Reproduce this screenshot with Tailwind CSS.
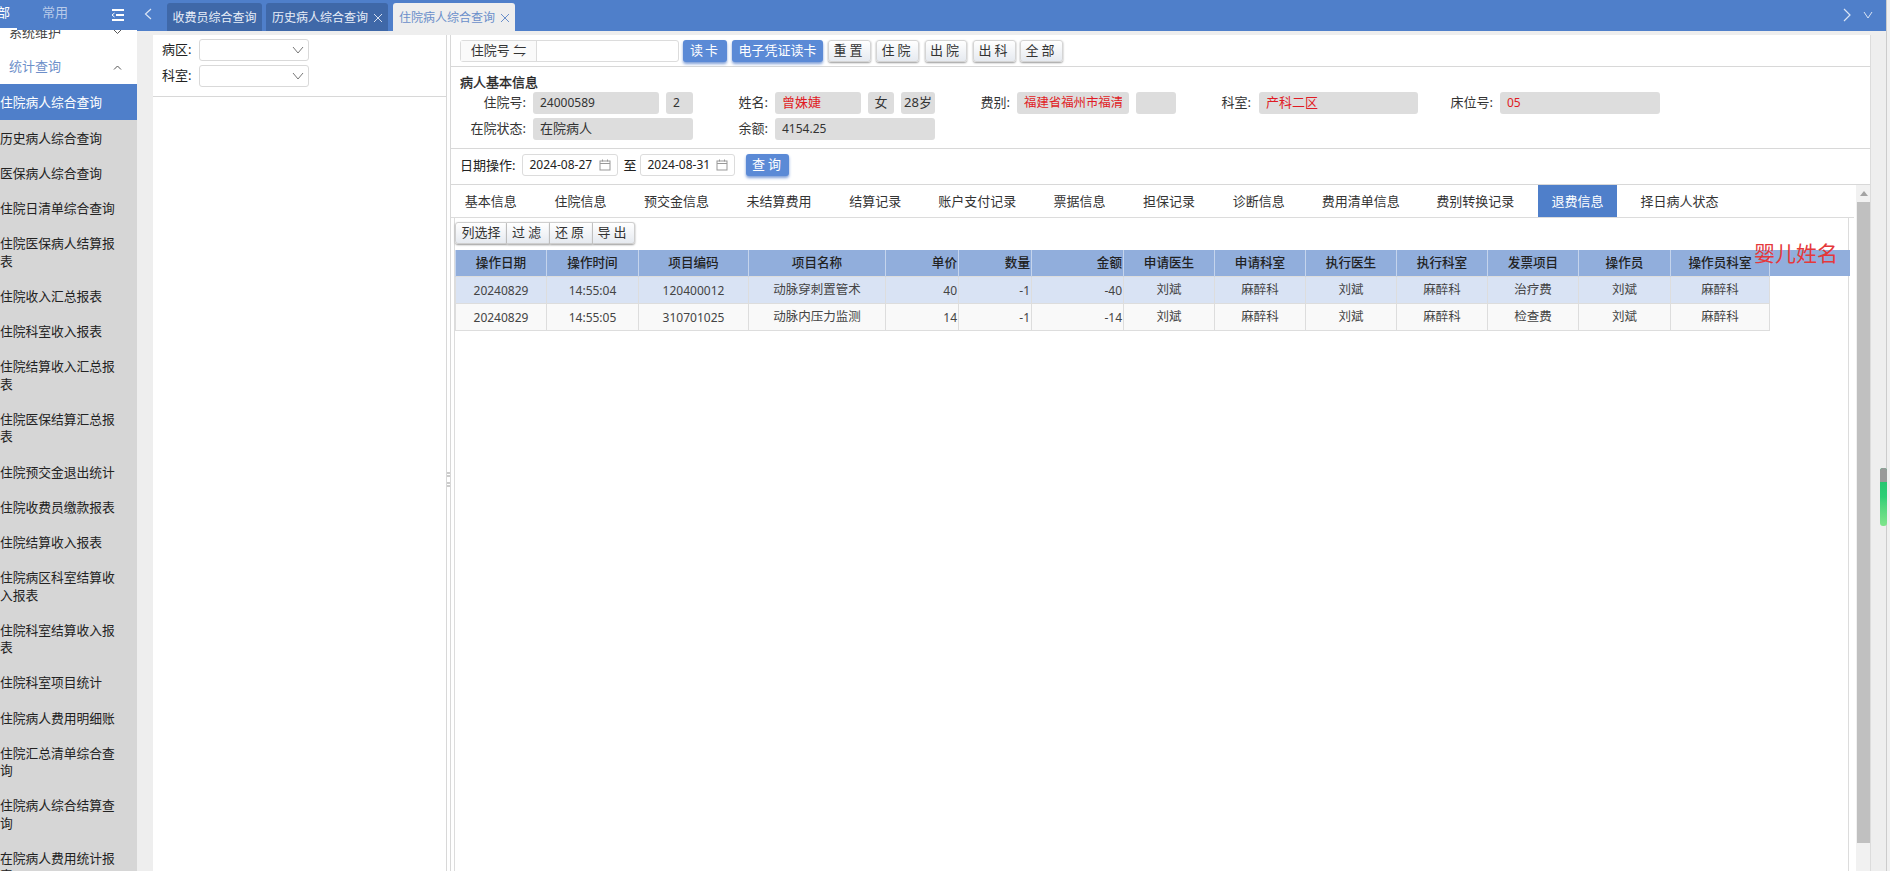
<!DOCTYPE html>
<html lang="zh-CN">
<head>
  <meta charset="UTF-8">
  <title>住院病人综合查询</title>
  <script src="https://cdn.jsdelivr.net/npm/@tailwindcss/browser@4"></script>
</head>
<body class="overflow-hidden bg-white text-[13px] text-[#333] font-['Noto_Sans','Noto_Sans_CJK_SC',sans-serif]">
<div class="relative flex h-[871px] w-[1890px] overflow-hidden">

  <!-- sidebar -->
  <aside class="flex w-[137px] shrink-0 flex-col bg-[#d6d6d6]">
    <div class="relative flex h-[30px] shrink-0 items-start bg-[#4f7fca] text-white">
      <span class="mt-[3px] block w-[42px] -indent-[3px]">部</span>
      <span class="mt-[3px] text-[#b9cbe9]">常用</span>
      <svg class="absolute left-[111px] top-[8px]" width="14" height="14" viewBox="0 0 14 14" fill="none" stroke="#fff" stroke-width="2"><path d="M1 2h12M5 7h8M1 12h12"/><path d="M3.5 5 1 7l2.5 2" stroke-width="1"/></svg>
      <div class="absolute bottom-0 left-0 h-[2px] w-[17px] bg-white"></div>
    </div>
    <div class="relative h-[24px] shrink-0 overflow-hidden bg-white">
      <span class="absolute left-[9px] -top-[7px] text-[#444]">系统维护</span>
      <svg class="absolute left-[113px] top-0" width="9" height="5" viewBox="0 0 9 5" fill="none" stroke="#555"><path d="M1 0l3.5 3.5L8 0"/></svg>
    </div>
    <div class="flex h-[30px] shrink-0 items-center justify-between bg-white pl-[9px] pr-[15px] pb-[4px] text-[#6d8fc9]">
      <span>统计查询</span>
      <svg width="9" height="5" viewBox="0 0 9 5" fill="none" stroke="#555"><path d="M1 4.5 4.5 1 8 4.5"/></svg>
    </div>
    <div class="flex h-[36px] shrink-0 items-center bg-[#4f7fca] pt-[1px] text-[12.75px] text-white">住院病人综合查询</div>
    <nav id="menu" class="text-[12.75px] text-[#222]"></nav>
  </aside>

  <main class="flex w-[1749px] shrink-0 flex-col bg-[#eeeeee]">
    <!-- tab bar -->
    <div class="flex h-[31px] shrink-0 items-end whitespace-nowrap bg-[#4f7fca] text-[12px]">
      <svg class="mb-[11px] ml-[7px] mr-[15px] shrink-0" width="8" height="12" viewBox="0 0 8 12" fill="none" stroke="#dbe5f5" stroke-width="1.2"><path d="M7 1 1.5 6 7 11"/></svg>
      <div class="flex h-[28px] w-[95px] items-center justify-center rounded-t-[3px] bg-[#3f68a8] pt-[1px] text-[#e8eef8]">收费员综合查询</div>
      <div class="ml-[4px] flex h-[28px] w-[122px] items-center gap-[5px] rounded-t-[3px] bg-[#3f68a8] pl-[6px] pt-[1px] text-[#e8eef8]">历史病人综合查询
        <svg width="10" height="10" viewBox="0 0 10 10" stroke="#d5dff0"><path d="M1 1l8 8M9 1l-8 8"/></svg>
      </div>
      <div class="ml-[5px] flex h-[28px] w-[122px] items-center gap-[5px] rounded-t-[3px] bg-[#eeeeee] pl-[6px] pt-[1px] text-[#6a8fca]">住院病人综合查询
        <svg width="10" height="10" viewBox="0 0 10 10" stroke="#6a8fca"><path d="M1 1l8 8M9 1l-8 8"/></svg>
      </div>
      <div class="ml-auto mb-[9px] flex items-center gap-[12px] pr-[13px]">
        <svg width="8" height="14" viewBox="0 0 8 14" fill="none" stroke="#dbe5f5" stroke-width="1.2"><path d="M1 1l6 6-6 6"/></svg>
        <svg width="10" height="8" viewBox="0 0 10 8" fill="none" stroke="#dbe5f5"><path d="M1 1l4 6 4-6"/></svg>
      </div>
    </div>

    <div class="flex min-h-0 flex-1 pt-[4px]">
      <!-- filter panel -->
      <section class="ml-[16px] w-[294px] shrink-0 border-r border-[#d8d8d8] bg-white">
        <div class="flex h-[62px] flex-col gap-[4px] border-b border-[#d8d8d8] pl-[9px] pt-[4px]">
          <label class="flex items-center gap-[6px]"><span class="w-[31px] text-[#222]">病区:</span>
            <span class="flex h-[22px] w-[110px] items-center justify-end rounded-[3px] border border-[#d9d9d9] bg-white pr-[4px]">
              <svg width="12" height="8" viewBox="0 0 12 8" fill="none" stroke="#777"><path d="M1 1l5 6 5-6"/></svg></span></label>
          <label class="flex items-center gap-[6px]"><span class="w-[31px] text-[#222]">科室:</span>
            <span class="flex h-[22px] w-[110px] items-center justify-end rounded-[3px] border border-[#d9d9d9] bg-white pr-[4px]">
              <svg width="12" height="8" viewBox="0 0 12 8" fill="none" stroke="#777"><path d="M1 1l5 6 5-6"/></svg></span></label>
        </div>
      </section>

      <!-- splitter -->
      <div class="flex w-[4px] shrink-0 flex-col gap-[1px] border-r border-[#d8d8d8] bg-white pt-[437px]">
        <span class="h-[2px] w-[3px] bg-[#cccccc]"></span><span class="h-[2px] w-[3px] bg-[#cccccc]"></span>
        <span class="mt-[4px] h-[2px] w-[3px] bg-[#cccccc]"></span><span class="h-[2px] w-[3px] bg-[#cccccc]"></span>
      </div>

      <!-- patient panel -->
      <section class="flex w-[1420px] shrink-0 flex-col border-r border-[#dcdcdc] bg-white">
        <div class="flex h-[32px] shrink-0 items-start gap-[5px] border-b border-[#d8d8d8] pl-[9px] pt-[5px]">
          <div class="mr-[-1px] flex h-[22px] w-[219px] rounded-[3px] border border-[#dcdcdc]">
            <span class="flex w-[76px] items-center justify-center border-r border-[#dcdcdc] bg-[#fafafa]">住院号 ⇋</span>
          </div>
          <button class="h-[22px] w-[44px] rounded-[3px] bg-[#5b8ad6] text-white tracking-[2px] shadow-[0_2px_3px_#7f9fd8]">读卡</button>
          <button class="h-[22px] w-[91px] rounded-[3px] bg-[#5b8ad6] text-white shadow-[0_2px_3px_#7f9fd8]">电子凭证读卡</button>
          <button class="h-[22px] w-[43px] rounded-[3px] border border-[#d5d5d5] bg-linear-to-b from-white to-[#e6eaf0] tracking-[3px] shadow-[0_1px_2px_#999]">重置</button>
          <button class="h-[22px] w-[43px] rounded-[3px] border border-[#d5d5d5] bg-linear-to-b from-white to-[#e6eaf0] tracking-[3px] shadow-[0_1px_2px_#999]">住院</button>
          <button class="ml-[1px] h-[22px] w-[42px] rounded-[3px] border border-[#d5d5d5] bg-linear-to-b from-white to-[#e6eaf0] tracking-[3px] shadow-[0_1px_2px_#999]">出院</button>
          <button class="ml-[1px] h-[22px] w-[43px] rounded-[3px] border border-[#d5d5d5] bg-linear-to-b from-white to-[#e6eaf0] tracking-[3px] shadow-[0_1px_2px_#999]">出科</button>
          <button class="ml-[-1px] h-[22px] w-[43px] rounded-[3px] border border-[#d5d5d5] bg-linear-to-b from-white to-[#e6eaf0] tracking-[3px] shadow-[0_1px_2px_#999]">全部</button>
        </div>

        <!-- basic info -->
        <div class="h-[82px] shrink-0 border-b border-[#d8d8d8] pl-[9px] pt-[6px]">
          <div class="h-[19px] leading-[19px] text-[#222] [-webkit-text-stroke:0.3px]">病人基本信息</div>
          <div class="flex h-[22px] items-center">
            <span class="w-[66px] text-right">住院号:</span>
            <span class="ml-[7px] flex h-[22px] w-[126px] items-center rounded-[3px] bg-[#dddddd] pl-[7px] text-[12px]">24000589</span>
            <span class="ml-[7px] flex h-[22px] w-[27px] items-center rounded-[3px] bg-[#dddddd] pl-[7px] text-[12px]">2</span>
            <span class="ml-[44px] w-[31px] text-right">姓名:</span>
            <span class="ml-[7px] flex h-[22px] w-[86px] items-center rounded-[3px] bg-[#dddddd] pl-[7px] text-[#e01b24]">曾姝婕</span>
            <span class="ml-[7px] flex h-[22px] w-[26px] items-center justify-center rounded-[3px] bg-[#dddddd]">女</span>
            <span class="ml-[7px] flex h-[22px] w-[34px] items-center justify-center rounded-[3px] bg-[#dddddd]">28岁</span>
            <span class="ml-[44px] w-[31px] text-right">费别:</span>
            <span class="ml-[7px] flex h-[22px] w-[112px] items-center rounded-[3px] bg-[#dddddd] px-[7px] text-[12.4px] text-[#e01b24]"><span class="block overflow-hidden whitespace-nowrap">福建省福州市福清市</span></span>
            <span class="ml-[7px] h-[22px] w-[40px] rounded-[3px] bg-[#dddddd]"></span>
            <span class="ml-[45px] w-[30px] text-right">科室:</span>
            <span class="ml-[8px] flex h-[22px] w-[159px] items-center rounded-[3px] bg-[#dddddd] pl-[7px] text-[#e01b24]">产科二区</span>
            <span class="ml-[32px] w-[43px] text-right">床位号:</span>
            <span class="ml-[7px] flex h-[22px] w-[160px] items-center rounded-[3px] bg-[#dddddd] pl-[7px] text-[12px] text-[#e01b24]">05</span>
          </div>
          <div class="mt-[4px] flex h-[22px] items-center">
            <span class="w-[66px] text-right">在院状态:</span>
            <span class="ml-[7px] flex h-[22px] w-[160px] items-center rounded-[3px] bg-[#dddddd] pl-[7px]">在院病人</span>
            <span class="ml-[44px] w-[31px] text-right">余额:</span>
            <span class="ml-[7px] flex h-[22px] w-[160px] items-center rounded-[3px] bg-[#dddddd] pl-[7px] text-[12px]">4154.25</span>
          </div>
        </div>

        <!-- date row -->
        <div class="flex h-[36px] shrink-0 items-start border-b border-[#d8d8d8] pl-[9px] pt-[5px] text-[#222]">
          <span class="leading-[22px]">日期操作:</span>
          <span class="ml-[7px] flex h-[22px] w-[96px] items-center justify-between rounded-[3px] border border-[#dcdcdc] px-[6px] text-[12px]">2024-08-27
            <svg width="12" height="12" viewBox="0 0 12 12" fill="none" stroke="#999"><rect x="1" y="2" width="10" height="9"/><path d="M1 4.5h10M3.5 .5v2M8.5 .5v2"/></svg></span>
          <span class="ml-[5px] w-[17px] leading-[22px]">至</span>
          <span class="flex h-[22px] w-[95px] items-center justify-between rounded-[3px] border border-[#dcdcdc] px-[6px] text-[12px]">2024-08-31
            <svg width="12" height="12" viewBox="0 0 12 12" fill="none" stroke="#999"><rect x="1" y="2" width="10" height="9"/><path d="M1 4.5h10M3.5 .5v2M8.5 .5v2"/></svg></span>
          <button class="ml-[11px] h-[22px] w-[43px] rounded-[3px] bg-[#5b8ad6] text-white tracking-[3px] shadow-[0_2px_3px_#7f9fd8]">查询</button>
        </div>

        <!-- detail area -->
        <div class="flex min-h-0 flex-1">
          <div class="flex w-[1403px] shrink-0 flex-col">
            <div class="flex h-[33px] shrink-0 gap-[10px] border-b border-[#dcdcdc] text-[#333]">
              <span class="flex w-[79.7px] items-center justify-center pt-[2px]">基本信息</span>
              <span class="flex w-[79.7px] items-center justify-center pt-[2px]">住院信息</span>
              <span class="flex w-[92.5px] items-center justify-center pt-[2px]">预交金信息</span>
              <span class="flex w-[92.5px] items-center justify-center pt-[2px]">未结算费用</span>
              <span class="flex w-[79.7px] items-center justify-center pt-[2px]">结算记录</span>
              <span class="flex w-[104.5px] items-center justify-center pt-[2px]">账户支付记录</span>
              <span class="flex w-[79.7px] items-center justify-center pt-[2px]">票据信息</span>
              <span class="flex w-[79.7px] items-center justify-center pt-[2px]">担保记录</span>
              <span class="flex w-[79.7px] items-center justify-center pt-[2px]">诊断信息</span>
              <span class="flex w-[104.5px] items-center justify-center pt-[2px]">费用清单信息</span>
              <span class="flex w-[104.5px] items-center justify-center pt-[2px]">费别转换记录</span>
              <span class="flex w-[79.7px] items-center justify-center bg-[#4f7fca] pt-[2px] text-white">退费信息</span>
              <span class="flex w-[104.5px] items-center justify-center pt-[2px]">择日病人状态</span>
            </div>
            <div class="ml-[3px] flex min-h-0 w-[1395px] flex-1 flex-col border-x border-[#dcdcdc]">
              <div class="flex h-[32px] shrink-0 items-start pt-[4px]">
                <button class="h-[22px] w-[52px] rounded-l-[3px] border border-[#cfcfcf] bg-linear-to-b from-white to-[#e6eaf0] shadow-[0_1px_2px_#999]">列选择</button>
                <button class="h-[22px] w-[43px] border-y border-r border-[#cfcfcf] bg-linear-to-b from-white to-[#e6eaf0] tracking-[3px] shadow-[0_1px_2px_#999]">过滤</button>
                <button class="h-[22px] w-[43px] border-y border-r border-[#cfcfcf] bg-linear-to-b from-white to-[#e6eaf0] tracking-[3px] shadow-[0_1px_2px_#999]">还原</button>
                <button class="h-[22px] w-[42px] rounded-r-[3px] border-y border-r border-[#cfcfcf] bg-linear-to-b from-white to-[#e6eaf0] tracking-[3px] shadow-[0_1px_2px_#999]">导出</button>
              </div>
              <table class="w-[1393px] table-fixed border-collapse">
                <colgroup>
                  <col class="w-[91px]"><col class="w-[92px]"><col class="w-[110px]"><col class="w-[137px]">
                  <col class="w-[73px]"><col class="w-[73px]"><col class="w-[92px]"><col class="w-[91px]">
                  <col class="w-[91px]"><col class="w-[91px]"><col class="w-[91px]"><col class="w-[91px]">
                  <col class="w-[92px]"><col class="w-[99px]"><col class="w-[80px]">
                </colgroup>
                <thead>
                  <tr class="h-[26px] bg-[#91aedc] text-[12.6px] text-[#222] [&_th]:pt-[2px]">
                    <th class="border-x border-[#c5d4ec] font-medium">操作日期</th>
                    <th class="border-x border-[#c5d4ec] font-medium">操作时间</th>
                    <th class="border-x border-[#c5d4ec] font-medium">项目编码</th>
                    <th class="border-x border-[#c5d4ec] font-medium">项目名称</th>
                    <th class="border-x border-[#c5d4ec] pr-[1px] text-right font-medium">单价</th>
                    <th class="border-x border-[#c5d4ec] pr-[1px] text-right font-medium">数量</th>
                    <th class="border-x border-[#c5d4ec] pr-[1px] text-right font-medium">金额</th>
                    <th class="border-x border-[#c5d4ec] font-medium">申请医生</th>
                    <th class="border-x border-[#c5d4ec] font-medium">申请科室</th>
                    <th class="border-x border-[#c5d4ec] font-medium">执行医生</th>
                    <th class="border-x border-[#c5d4ec] font-medium">执行科室</th>
                    <th class="border-x border-[#c5d4ec] font-medium">发票项目</th>
                    <th class="border-x border-[#c5d4ec] font-medium">操作员</th>
                    <th class="border-x border-[#c5d4ec] font-medium">操作员科室</th>
                    <th></th>
                  </tr>
                </thead>
                <tbody class="text-center text-[12.5px] text-[#444] [&_td]:pt-[2px]">
                  <tr class="h-[27px]">
                    <td class="border border-[#dddddd] bg-[#d9e3f4] text-[12px]">20240829</td><td class="border border-[#dddddd] bg-[#d9e3f4] text-[12px]">14:55:04</td><td class="border border-[#dddddd] bg-[#d9e3f4] text-[12px]">120400012</td><td class="border border-[#dddddd] bg-[#d9e3f4]">动脉穿刺置管术</td>
                    <td class="border border-[#dddddd] bg-[#d9e3f4] pr-[1px] text-right text-[12px]">40</td><td class="border border-[#dddddd] bg-[#d9e3f4] pr-[1px] text-right text-[12px]">-1</td><td class="border border-[#dddddd] bg-[#d9e3f4] pr-[1px] text-right text-[12px]">-40</td>
                    <td class="border border-[#dddddd] bg-[#d9e3f4]">刘斌</td><td class="border border-[#dddddd] bg-[#d9e3f4]">麻醉科</td><td class="border border-[#dddddd] bg-[#d9e3f4]">刘斌</td><td class="border border-[#dddddd] bg-[#d9e3f4]">麻醉科</td><td class="border border-[#dddddd] bg-[#d9e3f4]">治疗费</td><td class="border border-[#dddddd] bg-[#d9e3f4]">刘斌</td><td class="border border-[#dddddd] bg-[#d9e3f4]">麻醉科</td><td></td>
                  </tr>
                  <tr class="h-[27px]">
                    <td class="border border-[#dddddd] bg-[#f9f9f9] text-[12px]">20240829</td><td class="border border-[#dddddd] bg-[#f9f9f9] text-[12px]">14:55:05</td><td class="border border-[#dddddd] bg-[#f9f9f9] text-[12px]">310701025</td><td class="border border-[#dddddd] bg-[#f9f9f9]">动脉内压力监测</td>
                    <td class="border border-[#dddddd] bg-[#f9f9f9] pr-[1px] text-right text-[12px]">14</td><td class="border border-[#dddddd] bg-[#f9f9f9] pr-[1px] text-right text-[12px]">-1</td><td class="border border-[#dddddd] bg-[#f9f9f9] pr-[1px] text-right text-[12px]">-14</td>
                    <td class="border border-[#dddddd] bg-[#f9f9f9]">刘斌</td><td class="border border-[#dddddd] bg-[#f9f9f9]">麻醉科</td><td class="border border-[#dddddd] bg-[#f9f9f9]">刘斌</td><td class="border border-[#dddddd] bg-[#f9f9f9]">麻醉科</td><td class="border border-[#dddddd] bg-[#f9f9f9]">检查费</td><td class="border border-[#dddddd] bg-[#f9f9f9]">刘斌</td><td class="border border-[#dddddd] bg-[#f9f9f9]">麻醉科</td><td></td>
                  </tr>
                </tbody>
              </table>
            </div>
          </div>
          <!-- vertical scrollbar -->
          <div class="ml-[2px] flex w-[14px] shrink-0 flex-col items-end bg-[#f1f1f1] pt-[6px]">
            <svg class="mb-[6px] mr-[2px]" width="8" height="5" viewBox="0 0 8 5" fill="#a3a3a3"><path d="M4 0l4 5H0z"/></svg>
            <div class="h-[641px] w-[13px] bg-[#c0c0c0]"></div>
          </div>
        </div>
      </section>
      <div class="flex-1 bg-[#eeeeee]"></div>
    </div>
  </main>
  <div class="flex-1 border-l border-[#cccccc] bg-[#f0f0f0]"></div>

  <!-- overlays -->
  <div class="absolute left-[1754px] top-[239px] text-[21px] leading-[28px] text-[#e5383b]">婴儿姓名</div>
  <div class="absolute left-[1880px] top-[468px] h-[58px] w-[7px] rounded-[3px] bg-linear-to-b from-[#1fbd6b] via-[#2ecf76] to-[#7fe58c]">
    <div class="h-[14px] rounded-t-[3px] bg-[#999999]"></div>
  </div>
</div>

<script>
  const menu = ['历史病人综合查询','医保病人综合查询','住院日清单综合查询','住院医保病人结算报表','住院收入汇总报表','住院科室收入报表','住院结算收入汇总报表','住院医保结算汇总报表','住院预交金退出统计','住院收费员缴款报表','住院结算收入报表','住院病区科室结算收入报表','住院科室结算收入报表','住院科室项目统计','住院病人费用明细账','住院汇总清单综合查询','住院病人综合结算查询','在院病人费用统计报表'];
  const nav = document.getElementById('menu');
  menu.forEach(name => {
    const item = document.createElement('div');
    item.className = 'w-[116px] pt-[9.9px] pb-[7.9px] leading-[17.4px]';
    item.textContent = name;
    nav.appendChild(item);
  });
</script>
</body>
</html>
